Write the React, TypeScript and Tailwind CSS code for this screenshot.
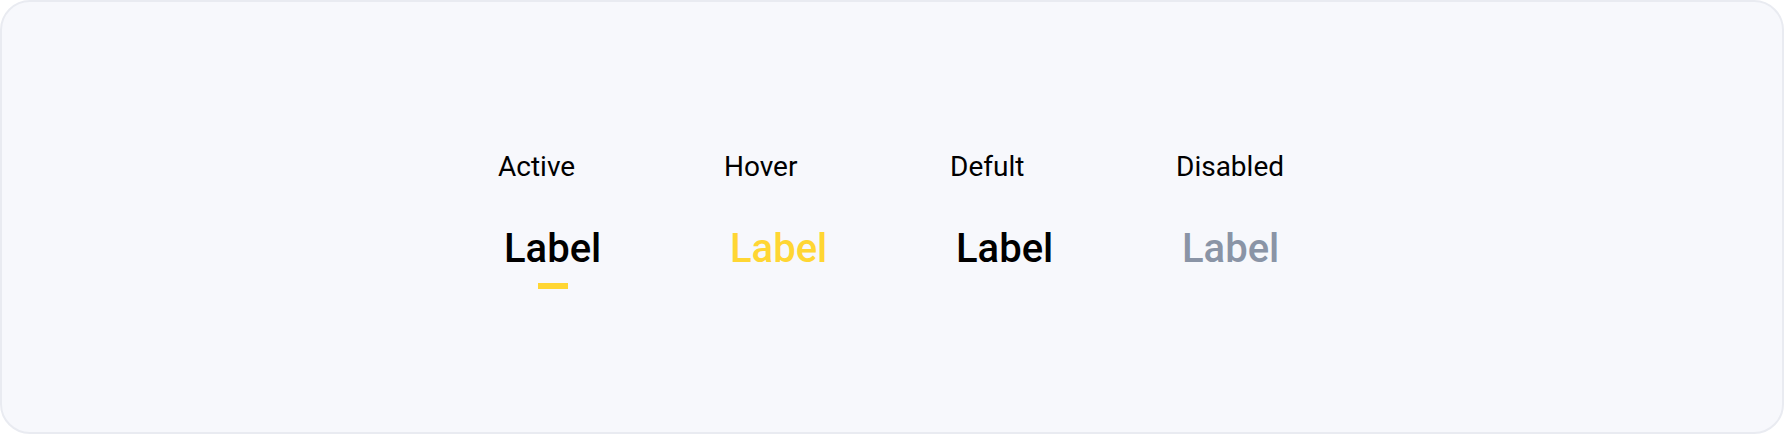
const states = [
  { name: 'Active', color: 'text-black', underline: true },
  { name: 'Hover', color: 'text-[#FFD633]', underline: false },
  { name: 'Defult', color: 'text-black', underline: false },
  { name: 'Disabled', color: 'text-[#8A94A6]', underline: false },
];

export default function App() {
  return (
    <div className="w-[1784px] h-[434px] bg-white" style={{ fontFamily: 'Roboto, "Liberation Sans", sans-serif' }}>
      <div className="w-full h-full rounded-[30px] border-2 border-[#E9EBF1] bg-[#F7F8FC] flex justify-center pr-[8px] pt-[151px]">
        <div className="flex gap-[124px]">
          {states.map((s) => (
            <div key={s.name} className="w-[102px] flex flex-col items-start">
              <span className="text-[28px] leading-none text-black">{s.name}</span>
              <div className="mt-[48px] pl-[6px] flex flex-col items-center">
                <span className={`text-[40px] leading-none font-medium ${s.color}`}>Label</span>
                {s.underline && <div className="mt-[14px] w-[30px] h-[6px] bg-[#FFD633]" />}
              </div>
            </div>
          ))}
        </div>
      </div>
    </div>
  );
}
